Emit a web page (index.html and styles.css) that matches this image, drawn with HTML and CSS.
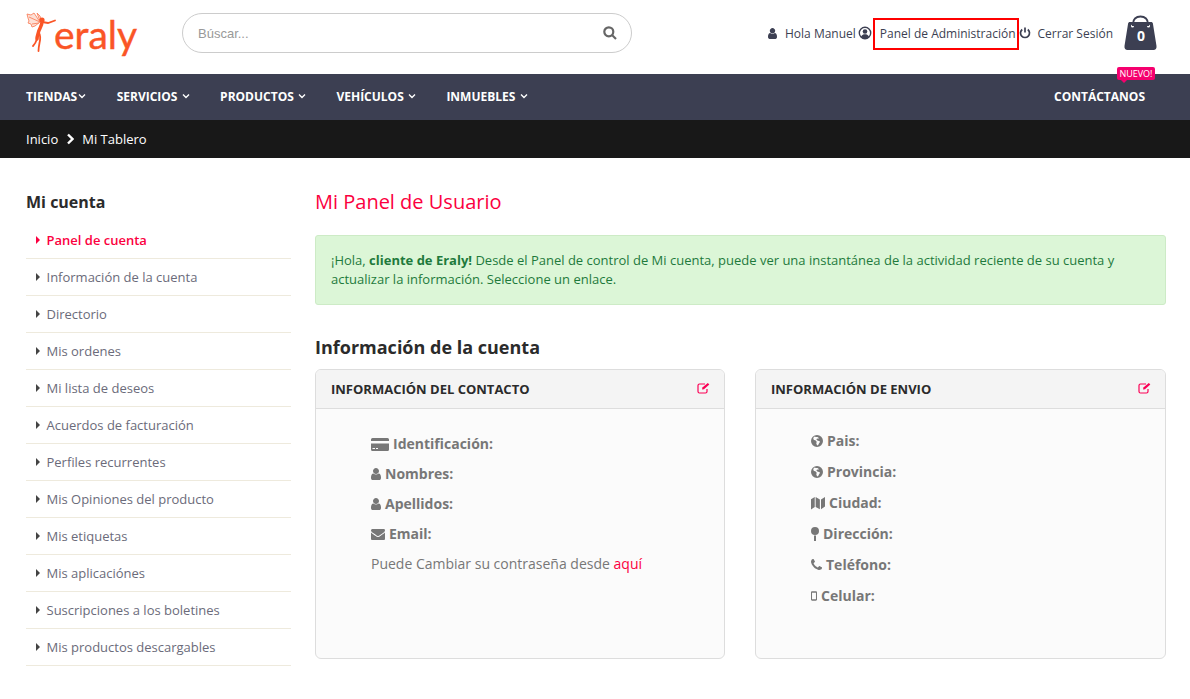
FILE: index.html
```html
<!DOCTYPE html>
<html lang="es">
<head>
<meta charset="utf-8">
<title>Eraly - Mi Panel de Usuario</title>
<link rel="stylesheet" href="styles.css">
</head>
<body>
<svg class="defs" width="0" height="0" aria-hidden="true">
  <symbol id="i-user" viewBox="256 128 1280 1536"><path d="M1536 1399q0 109-62.5 187t-150.5 78h-854q-88 0-150.5-78t-62.5-187q0-85 8.5-160.5t31.5-152 58.5-131 94-89 134.5-34.5q131 128 313 128t313-128q76 0 134.5 34.5t94 89 58.5 131 31.5 152 8.5 160.5zm-256-887q0 159-112.5 271.5t-271.5 112.5-271.5-112.5-112.5-271.5 112.5-271.5 271.5-112.5 271.5 112.5 112.5 271.5z"/></symbol>
  <symbol id="i-env" viewBox="0 256 1792 1408"><path d="M1792 710v794q0 66-47 113t-113 47h-1472q-66 0-113-47t-47-113v-794q44 49 101 87 362 246 497 345 57 42 92.5 65.5t94.5 48 110 24.5h2q51 0 110-24.5t94.5-48 92.5-65.5q170-123 498-345 57-39 100-87zm0-294q0 79-49 151t-122 123q-376 261-468 325-10 7-42.5 30.5t-54 38-52 32.5-57.5 27-50 9h-2q-23 0-50-9t-57.5-27-52-32.5-54-38-42.5-30.5q-91-64-262-182.5t-205-142.5q-62-42-117-115.5t-55-136.5q0-78 41.5-130t118.5-52h1472q65 0 112.5 47t47.5 113z"/></symbol>
  <symbol id="i-phone" viewBox="192 128 1408 1408"><path d="M1600 1240q0 27-10 70.5t-21 68.5q-21 50-122 106-94 51-186 51-27 0-53-3.5t-57.5-12.5-47-14.5-55.5-20.5-49-18q-98-35-175-83-127-79-264-216t-216-264q-48-77-83-175-3-9-18-49t-20.5-55.5-14.5-47-12.5-57.5-3.5-53q0-92 51-186 56-101 106-122 25-11 68.5-21t70.5-10q14 0 21 3 18 6 53 76 11 19 30 54t35 63.5 31 53.5q3 4 17.5 25t21.5 35.5 7 28.5q0 20-28.5 50t-62 55-62 53-28.5 46q0 9 5 22.5t8.5 20.5 14 24 11.5 19q76 137 174 235t235 174q2 1 19 11.5t24 14 20.5 8.5 22.5 5q18 0 46-28.5t53-62 55-62 50-28.5q14 0 28.5 7t35.5 21.5 25 17.5q25 15 53.5 31t63.5 35 54 30q70 35 76 53 3 7 3 21z"/></symbol>
  <symbol id="i-card" viewBox="0 0 18 13"><path d="M1.500 0h15A1.500 1.500 0 0 1 18 1.500V3H0V1.500A1.500 1.500 0 0 1 1.500 0zM0 5.500h18v6A1.500 1.500 0 0 1 16.500 13h-15A1.500 1.500 0 0 1 0 11.500zM1.500 10v1h2.500v-1zm3.500 0v1h2v-1z" fill-rule="evenodd"/></symbol>
  <symbol id="i-globe" viewBox="0 0 12 12"><path fill-rule="evenodd" d="M6 0a6 6 0 1 1 0 12A6 6 0 0 1 6 0zM3.500 1.600 2.200 3.100l.5 1.700 2 .7 1 1.300-.4 1.600.9 2 1-.4 1-2 1-1.200-1.200-.9-1.600-.5-1-.9.600-.9 1.300.2.500-.9-1.300-.9-1.600.1z"/></symbol>
  <symbol id="i-map" viewBox="0 0 15 14"><path d="M0 3 4 .5v10.800L0 14zM5 .5l4.500 2.700v10.500L5 11.200zM10.700 3.200 15 .5v10.300L10.700 13.700z"/></symbol>
  <symbol id="i-pin" viewBox="0 0 8 14"><path d="M4 0a4 4 0 1 1 0 8 4 4 0 0 1 0-8zM3 8.500h2V14H3z"/></symbol>
  <symbol id="i-mobile" viewBox="0 0 7 11"><path fill-rule="evenodd" d="M1.300 0h4.400C6.400 0 7 .6 7 1.300v8.400C7 10.400 6.400 11 5.700 11H1.300C.6 11 0 10.400 0 9.700V1.300C0 .6.600 0 1.300 0zM1.200 1.800v7.400h4.600V1.800z"/></symbol>
</svg>

<header class="top">
  <a class="logo" href="#">
    <svg class="fairy" viewBox="0 0 32 44" aria-hidden="true">
      <path class="wing" d="M14 11 8 2 5 4 1 3l1 4 1 3-1 2 3 1 1 3 3-1 5-4zM14 11 3 6M13 12 6 13M14 10 11 2l3 3 1 4"/>
      <circle class="head" cx="16" cy="9" r="2.600"/>
      <path class="limb" d="M16 11l6 1 7-2.500"/>
      <path class="limb thick" d="M16 11c0 4-3 7-3.500 10-.3 2-1.500 4-1.500 7"/>
      <path class="limb" d="M11 28c-1 3-2 5-4 7M12.500 21c2 3 2 7 1 11-.4 2-1 5-1 8"/>
    </svg>
    <span class="logo-text">eraly</span>
  </a>
  <form class="search">
    <input class="search-input" type="text" placeholder="Búscar...">
    <svg class="search-icon" viewBox="0 0 14 14" aria-hidden="true"><circle cx="5.800" cy="5.800" r="4.500"/><path d="M9 9l4 4"/></svg>
  </form>
  <nav class="account">
    <svg class="ic ic-hola"><use href="#i-user"/></svg>
    <a class="acc-link hola" href="#">Hola Manuel</a>
    <svg class="ic-circle" viewBox="0 0 14 14" aria-hidden="true"><circle cx="7" cy="7" r="5.700"/><circle class="solid" cx="7" cy="5.500" r="2.300"/><path class="solid" d="M3 10.800c1-2 2.300-2.600 4-2.600s3 .6 4 2.600c-1 1-2.500 1.600-4 1.600s-3-.6-4-1.600z"/></svg>
    <a class="acc-link panel" href="#">Panel de Administración</a>
    <svg class="ic-power" viewBox="0 0 12 12" aria-hidden="true"><path d="M3.200 2.500a4.500 4.500 0 1 0 5.600 0M6 .6v5"/></svg>
    <a class="acc-link cerrar" href="#">Cerrar Sesión</a>
    <a class="bag" href="#">
      <svg class="bag-svg" viewBox="0 0 33 36" aria-hidden="true"><path class="bag-handle" d="M9 11V9c0-4.500 3-7.500 7.500-7.500S24 4.500 24 9v2"/><path fill-rule="evenodd" d="M6 7h21c1 0 1.700.5 1.900 1.500L32.500 31c.3 2.500-1 4-3 4h-26c-2 0-3.300-1.500-3-4L4.100 8.500C4.300 7.500 5 7 6 7zM8.500 9.500a1.500 1.500 0 1 0 0 3 1.500 1.500 0 0 0 0-3zm16 0a1.500 1.500 0 1 0 0 3 1.500 1.500 0 0 0 0-3z"/></svg>
      <span class="bag-count">0</span>
    </a>
  </nav>
</header>

<nav class="mainnav">
  <a class="nav-item first" href="#">Tiendas<svg class="chev" viewBox="0 0 8 6"><path d="M1 1.500l3 3 3-3"/></svg></a>
  <a class="nav-item" href="#">Servicios <svg class="chev" viewBox="0 0 8 6"><path d="M1 1.500l3 3 3-3"/></svg></a>
  <a class="nav-item" href="#">Productos <svg class="chev" viewBox="0 0 8 6"><path d="M1 1.500l3 3 3-3"/></svg></a>
  <a class="nav-item" href="#">Vehículos <svg class="chev" viewBox="0 0 8 6"><path d="M1 1.500l3 3 3-3"/></svg></a>
  <a class="nav-item" href="#">Inmuebles <svg class="chev" viewBox="0 0 8 6"><path d="M1 1.500l3 3 3-3"/></svg></a>
  <a class="nav-item contact" href="#">Contáctanos<span class="badge">NUEVO!</span></a>
</nav>

<div class="crumbs">
  <a href="#">Inicio</a>
  <svg class="crumb-sep" viewBox="0 0 8 12"><path d="M2 1.500 6.500 6 2 10.500"/></svg>
  <span>Mi Tablero</span>
</div>

<div class="layout">
  <aside class="side">
    <h2 class="side-title">Mi cuenta</h2>
    <ul class="side-list">
      <li class="side-item active"><a href="#">Panel de cuenta</a></li>
      <li class="side-item"><a href="#">Información de la cuenta</a></li>
      <li class="side-item"><a href="#">Directorio</a></li>
      <li class="side-item"><a href="#">Mis ordenes</a></li>
      <li class="side-item"><a href="#">Mi lista de deseos</a></li>
      <li class="side-item"><a href="#">Acuerdos de facturación</a></li>
      <li class="side-item"><a href="#">Perfiles recurrentes</a></li>
      <li class="side-item"><a href="#">Mis Opiniones del producto</a></li>
      <li class="side-item"><a href="#">Mis etiquetas</a></li>
      <li class="side-item"><a href="#">Mis aplicaciónes</a></li>
      <li class="side-item"><a href="#">Suscripciones a los boletines</a></li>
      <li class="side-item"><a href="#">Mis productos descargables</a></li>
    </ul>
  </aside>
  <main class="content">
    <h1 class="page-title">Mi Panel de Usuario</h1>
    <div class="alert">¡Hola, <strong>cliente de Eraly!</strong> Desde el Panel de control de Mi cuenta, puede ver una instantánea de la actividad reciente de su cuenta y actualizar la información. Seleccione un enlace.</div>
    <h2 class="section-title">Información de la cuenta</h2>
    <div class="cards">
      <section class="card">
        <header class="card-head">
          <h3>Información del contacto</h3>
          <svg class="edit" viewBox="0 0 13 12"><path class="edit-box" d="M10 7v2.500A1.500 1.500 0 0 1 8.500 11h-6A1.500 1.500 0 0 1 1 9.500v-6A1.500 1.500 0 0 1 2.500 2H8"/><path class="edit-pen" d="M5 7.500l.4-1.900L10.800.9l1.500 1.500L7 7.200z"/></svg>
        </header>
        <div class="card-body contact-body">
          <p class="row"><svg class="ri ri-card"><use href="#i-card"/></svg>Identificación:</p>
          <p class="row"><svg class="ri ri-user"><use href="#i-user"/></svg>Nombres:</p>
          <p class="row"><svg class="ri ri-user"><use href="#i-user"/></svg>Apellidos:</p>
          <p class="row"><svg class="ri ri-env"><use href="#i-env"/></svg>Email:</p>
          <p class="row plain">Puede Cambiar su contraseña desde <a href="#">aquí</a></p>
        </div>
      </section>
      <section class="card">
        <header class="card-head">
          <h3>Información de envio</h3>
          <svg class="edit" viewBox="0 0 13 12"><path class="edit-box" d="M10 7v2.500A1.500 1.500 0 0 1 8.500 11h-6A1.500 1.500 0 0 1 1 9.500v-6A1.500 1.500 0 0 1 2.500 2H8"/><path class="edit-pen" d="M5 7.500l.4-1.900L10.800.9l1.500 1.500L7 7.200z"/></svg>
        </header>
        <div class="card-body ship-body">
          <p class="row"><svg class="ri ri-globe"><use href="#i-globe"/></svg>Pais:</p>
          <p class="row"><svg class="ri ri-globe"><use href="#i-globe"/></svg>Provincia:</p>
          <p class="row"><svg class="ri ri-map"><use href="#i-map"/></svg>Ciudad:</p>
          <p class="row"><svg class="ri ri-pin"><use href="#i-pin"/></svg>Dirección:</p>
          <p class="row"><svg class="ri ri-phone"><use href="#i-phone"/></svg>Teléfono:</p>
          <p class="row"><svg class="ri ri-mobile"><use href="#i-mobile"/></svg>Celular:</p>
        </div>
      </section>
    </div>
  </main>
</div>
</body>
</html>
```

FILE: styles.css
```css
* { box-sizing: border-box; }
html, body { margin: 0; padding: 0; height: 699px; overflow: hidden; background: #fff; }
body { font-family: "Open Sans", "Liberation Sans", sans-serif; font-size: 13px; color: #3c3f52; }
a { color: inherit; text-decoration: none; }
h1, h2, h3, p, ul { margin: 0; padding: 0; }
.defs { position: absolute; }

/* Top header */
.top { display: flex; align-items: center; height: 74px; padding: 0 33px 8px 26px; }
.logo { display: flex; align-items: center; width: 156px; height: 44px; color: #fa5526; }
.fairy { width: 32px; height: 44px; flex: none; }
.fairy .wing { fill: #fde0d6; stroke: #f9825f; stroke-width: .9; }
.fairy .head { fill: #fa5526; }
.fairy .limb { fill: none; stroke: #fa5526; stroke-width: 1.800; stroke-linecap: round; }
.fairy .thick { stroke-width: 3.500; }
.logo-text { font-family: Lato, sans-serif; font-size: 39px; line-height: 44px; margin: 2px 0 0 -4px; -webkit-text-stroke: .4px #fa5526; }
.search { position: relative; width: 450px; height: 40px; }
.search-input { width: 100%; height: 40px; border: 1px solid #ccc; border-radius: 20px; padding: 0 40px 0 15px; font: 13px "Liberation Sans", Arial, sans-serif; outline: none; background: #fff; }
.search-input::placeholder { color: #999; }
.search-icon { position: absolute; right: 15px; top: 13px; width: 14px; height: 14px; fill: none; stroke: #666; stroke-width: 2.200; }
.account { display: flex; align-items: center; margin-left: auto; font-size: 12px; }
.ic { fill: #3c3f52; }
.ic-hola { width: 9px; height: 11px; margin-right: 8px; }
.ic-circle { width: 14px; height: 14px; margin: 0 1px 0 2px; fill: none; stroke: #3c3f52; stroke-width: 1.400; }
.ic-circle .solid { fill: #3c3f52; stroke: none; }
.panel { border: 2px solid #f00; height: 32px; line-height: 28px; padding: 0 1px 0 5px; margin-top: 2px; }
.ic-power { width: 12px; height: 12px; fill: none; stroke: #3c3f52; stroke-width: 1.700; margin-right: 7px; }
.bag { position: relative; width: 33px; height: 36px; margin-left: 11px; display: block; }
.bag-svg { width: 33px; height: 36px; fill: #3c3f52; display: block; }
.bag-handle { fill: none; stroke: #3c3f52; stroke-width: 2; }
.bag-count { position: absolute; left: 1px; right: 0; top: 11px; text-align: center; color: #fff; font-weight: 700; font-size: 14px; line-height: 20px; }

/* Nav */
.mainnav { display: flex; align-items: center; height: 46px; background: #3c3f52; padding: 0 45px 2px 26px; color: #fff; }
.nav-item { position: relative; font-size: 12px; font-weight: 700; text-transform: uppercase; margin-right: 30.500px; display: flex; align-items: center; white-space: pre; }
.chev { width: 8px; height: 6px; fill: none; stroke: #fff; stroke-width: 1.400; margin-left: 1px; }
.contact { margin: 0 0 0 auto; }
.badge { position: absolute; right: -10px; top: -21px; background: #f5006e; color: #fff; font-size: 9px; font-weight: 400; line-height: 13px; padding: 0 2.500px; border-radius: 2px; }
.badge::after { content: ""; position: absolute; left: 4px; top: 13px; border: 3px solid transparent; border-top-color: #f5006e; border-bottom: 0; }

/* Breadcrumb */
.crumbs { display: flex; align-items: center; height: 38px; background: #181818; color: #fff; padding-left: 26px; font-size: 13px; }
.crumb-sep { width: 8px; height: 12px; margin: 0 8px; fill: none; stroke: #fff; stroke-width: 2.400; }

/* Layout */
.layout { display: flex; padding: 0 24px 0 26px; gap: 24px; }
.side { width: 265px; flex: none; padding-top: 33px; }
.side-title { font-size: 16px; font-weight: 700; line-height: 22px; color: #2b2b2b; margin-bottom: 9px; }
.side-list { list-style: none; }
.side-item { height: 37px; line-height: 36px; border-bottom: 1px solid #eeeadd; padding-left: 20.500px; position: relative; font-size: 13px; color: #6b6b7a; }
.side-item::before { content: ""; position: absolute; left: 10px; top: 14px; border-style: solid; border-width: 4px 0 4px 4px; border-color: transparent transparent transparent #444; }
.side-item.active { color: #fb0040; font-weight: 600; }
.side-item.active::before { border-left-color: #fb0040; }
.content { flex: 1; min-width: 0; padding-top: 30px; }
.page-title { font-size: 20px; font-weight: 400; line-height: 28px; color: #fb0040; margin-bottom: 19px; }
.alert { height: 70px; background: #dcf6d7; border: 1px solid #cdebc6; border-radius: 3px; padding: 14.500px 15px; color: #1e7a3c; font-size: 13px; line-height: 19.500px; margin-bottom: 29px; }
.alert strong { font-weight: 700; }
.section-title { font-size: 18px; font-weight: 700; line-height: 26px; color: #2b2b2b; margin-bottom: 9px; }
.cards { display: grid; grid-template-columns: 410px 411px; gap: 30px; }
.card { height: 290px; border: 1px solid #ddd; border-radius: 6px; background: #fbfbfb; overflow: hidden; }
.card-head { display: flex; align-items: center; justify-content: space-between; height: 39px; background: #f4f4f4; border-bottom: 1px solid #ddd; padding: 0 14px 0 15px; }
.card-head h3 { font-size: 13px; font-weight: 700; text-transform: uppercase; color: #2b2b2b; }
.edit { width: 13px; height: 12px; margin-top: -3px; fill: none; stroke: #fb0055; stroke-width: 1.200; }
.edit-pen { fill: #fb0055; stroke: none; }
.card-body { padding-left: 55px; }
.contact-body { padding-top: 20px; }
.ship-body { padding-top: 16px; }
.row { display: flex; align-items: center; font-size: 14px; font-weight: 700; line-height: 30px; color: #777; height: 30px; }
.ship-body .row { height: 31px; line-height: 31px; }
.row.plain { font-weight: 400; display: block; }
.row.plain a { color: #fb0040; }
.ri { fill: #777; margin-right: 4px; flex: none; }
.ri-card { width: 18px; height: 13px; }
.ri-user { width: 10px; height: 12px; }
.ri-env { width: 14px; height: 11px; }
.ri-globe { width: 12px; height: 12px; }
.ri-map { width: 14px; height: 14px; }
.ri-pin { width: 8px; height: 14px; }
.ri-phone { width: 11px; height: 11px; }
.ri-mobile { width: 6px; height: 10px; }
```
